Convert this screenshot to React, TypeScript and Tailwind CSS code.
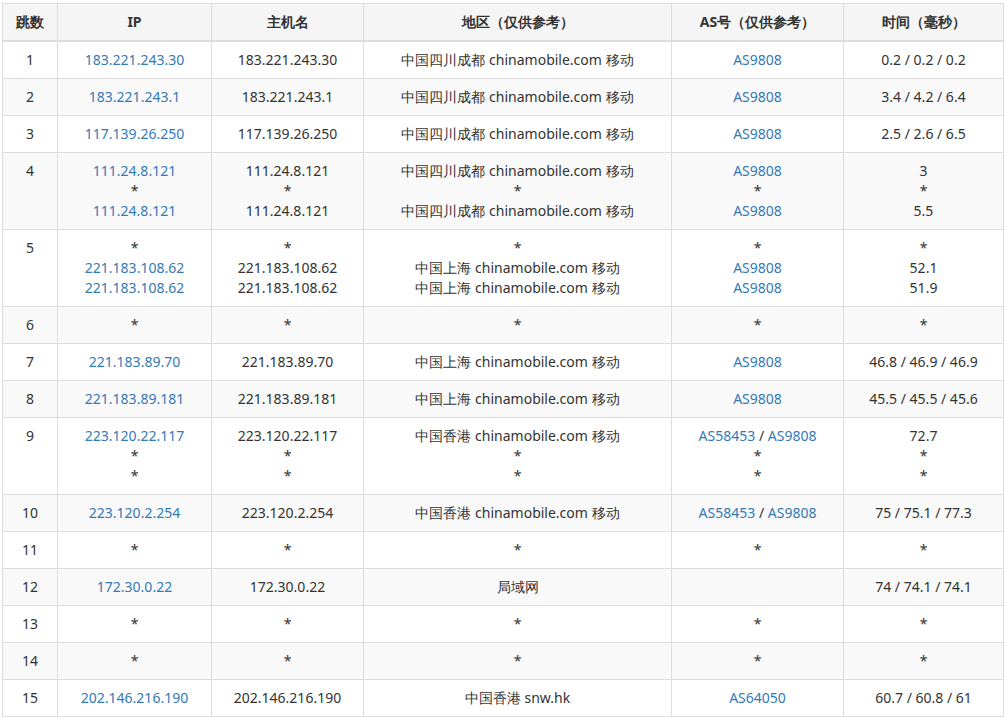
const rows: [string, string[], string[], string[], string[][], string[]][] = [
  ["1", ["183.221.243.30"], ["183.221.243.30"], ["中国四川成都 chinamobile.com 移动"], [["AS9808"]], ["0.2 / 0.2 / 0.2"]],
  ["2", ["183.221.243.1"], ["183.221.243.1"], ["中国四川成都 chinamobile.com 移动"], [["AS9808"]], ["3.4 / 4.2 / 6.4"]],
  ["3", ["117.139.26.250"], ["117.139.26.250"], ["中国四川成都 chinamobile.com 移动"], [["AS9808"]], ["2.5 / 2.6 / 6.5"]],
  ["4", ["111.24.8.121", "*", "111.24.8.121"], ["111.24.8.121", "*", "111.24.8.121"], ["中国四川成都 chinamobile.com 移动", "*", "中国四川成都 chinamobile.com 移动"], [["AS9808"], ["*"], ["AS9808"]], ["3", "*", "5.5"]],
  ["5", ["*", "221.183.108.62", "221.183.108.62"], ["*", "221.183.108.62", "221.183.108.62"], ["*", "中国上海 chinamobile.com 移动", "中国上海 chinamobile.com 移动"], [["*"], ["AS9808"], ["AS9808"]], ["*", "52.1", "51.9"]],
  ["6", ["*"], ["*"], ["*"], [["*"]], ["*"]],
  ["7", ["221.183.89.70"], ["221.183.89.70"], ["中国上海 chinamobile.com 移动"], [["AS9808"]], ["46.8 / 46.9 / 46.9"]],
  ["8", ["221.183.89.181"], ["221.183.89.181"], ["中国上海 chinamobile.com 移动"], [["AS9808"]], ["45.5 / 45.5 / 45.6"]],
  ["9", ["223.120.22.117", "*", "*"], ["223.120.22.117", "*", "*"], ["中国香港 chinamobile.com 移动", "*", "*"], [["AS58453", "AS9808"], ["*"], ["*"]], ["72.7", "*", "*"]],
  ["10", ["223.120.2.254"], ["223.120.2.254"], ["中国香港 chinamobile.com 移动"], [["AS58453", "AS9808"]], ["75 / 75.1 / 77.3"]],
  ["11", ["*"], ["*"], ["*"], [["*"]], ["*"]],
  ["12", ["172.30.0.22"], ["172.30.0.22"], ["局域网"], [[""]], ["74 / 74.1 / 74.1"]],
  ["13", ["*"], ["*"], ["*"], [["*"]], ["*"]],
  ["14", ["*"], ["*"], ["*"], [["*"]], ["*"]],
  ["15", ["202.146.216.190"], ["202.146.216.190"], ["中国香港 snw.hk"], [["AS64050"]], ["60.7 / 60.8 / 61"]],
];
const L = "text-[#337ab7]";
const td = "border border-[#ddd] px-2 py-2 align-top";
export default function App() {
  return (
    <div className="pl-[2px] pt-[3px] bg-white font-['Open_Sans','Noto_Sans_CJK_SC',sans-serif]">
      <table className="w-[1001px] table-fixed border-collapse text-[14px] leading-[20px] text-[#333] text-center">
        <colgroup>
          <col className="w-[55px]" /><col className="w-[154px]" /><col className="w-[152px]" /><col className="w-[308px]" /><col className="w-[172px]" /><col className="w-[160px]" />
        </colgroup>
        <thead>
          <tr className="bg-[#f5f5f5]">
            {["跳数", "IP", "主机名", "地区（仅供参考）", "AS号（仅供参考）", "时间（毫秒）"].map((h) => (
              <th key={h} className="border border-[#ddd] border-b-2 px-1 py-2 font-bold">{h}</th>
            ))}
          </tr>
        </thead>
        <tbody>
          {rows.map((r, i) => (
            <tr key={r[0]} className={i % 2 ? "bg-[#f9f9f9]" : "bg-white"}>
              <td className={td}>{r[0]}</td>
              <td className={td}>{r[1].map((s, j) => <div key={j} className={s === "*" ? "" : L}>{s}</div>)}</td>
              <td className={td}>{r[2].map((s, j) => <div key={j}>{s}</div>)}</td>
              <td className={td}>{r[3].map((s, j) => <div key={j}>{s}</div>)}</td>
              <td className={td}>{r[4].map((a, j) => (
                <div key={j} className="min-h-[20px]">{a.map((s, k) => (
                  <span key={k}>{k > 0 && " / "}<span className={s === "*" ? "" : L}>{s}</span></span>
                ))}</div>
              ))}</td>
              <td className={td}>{r[5].map((s, j) => <div key={j}>{s}</div>)}</td>
            </tr>
          ))}
        </tbody>
      </table>
    </div>
  );
}
